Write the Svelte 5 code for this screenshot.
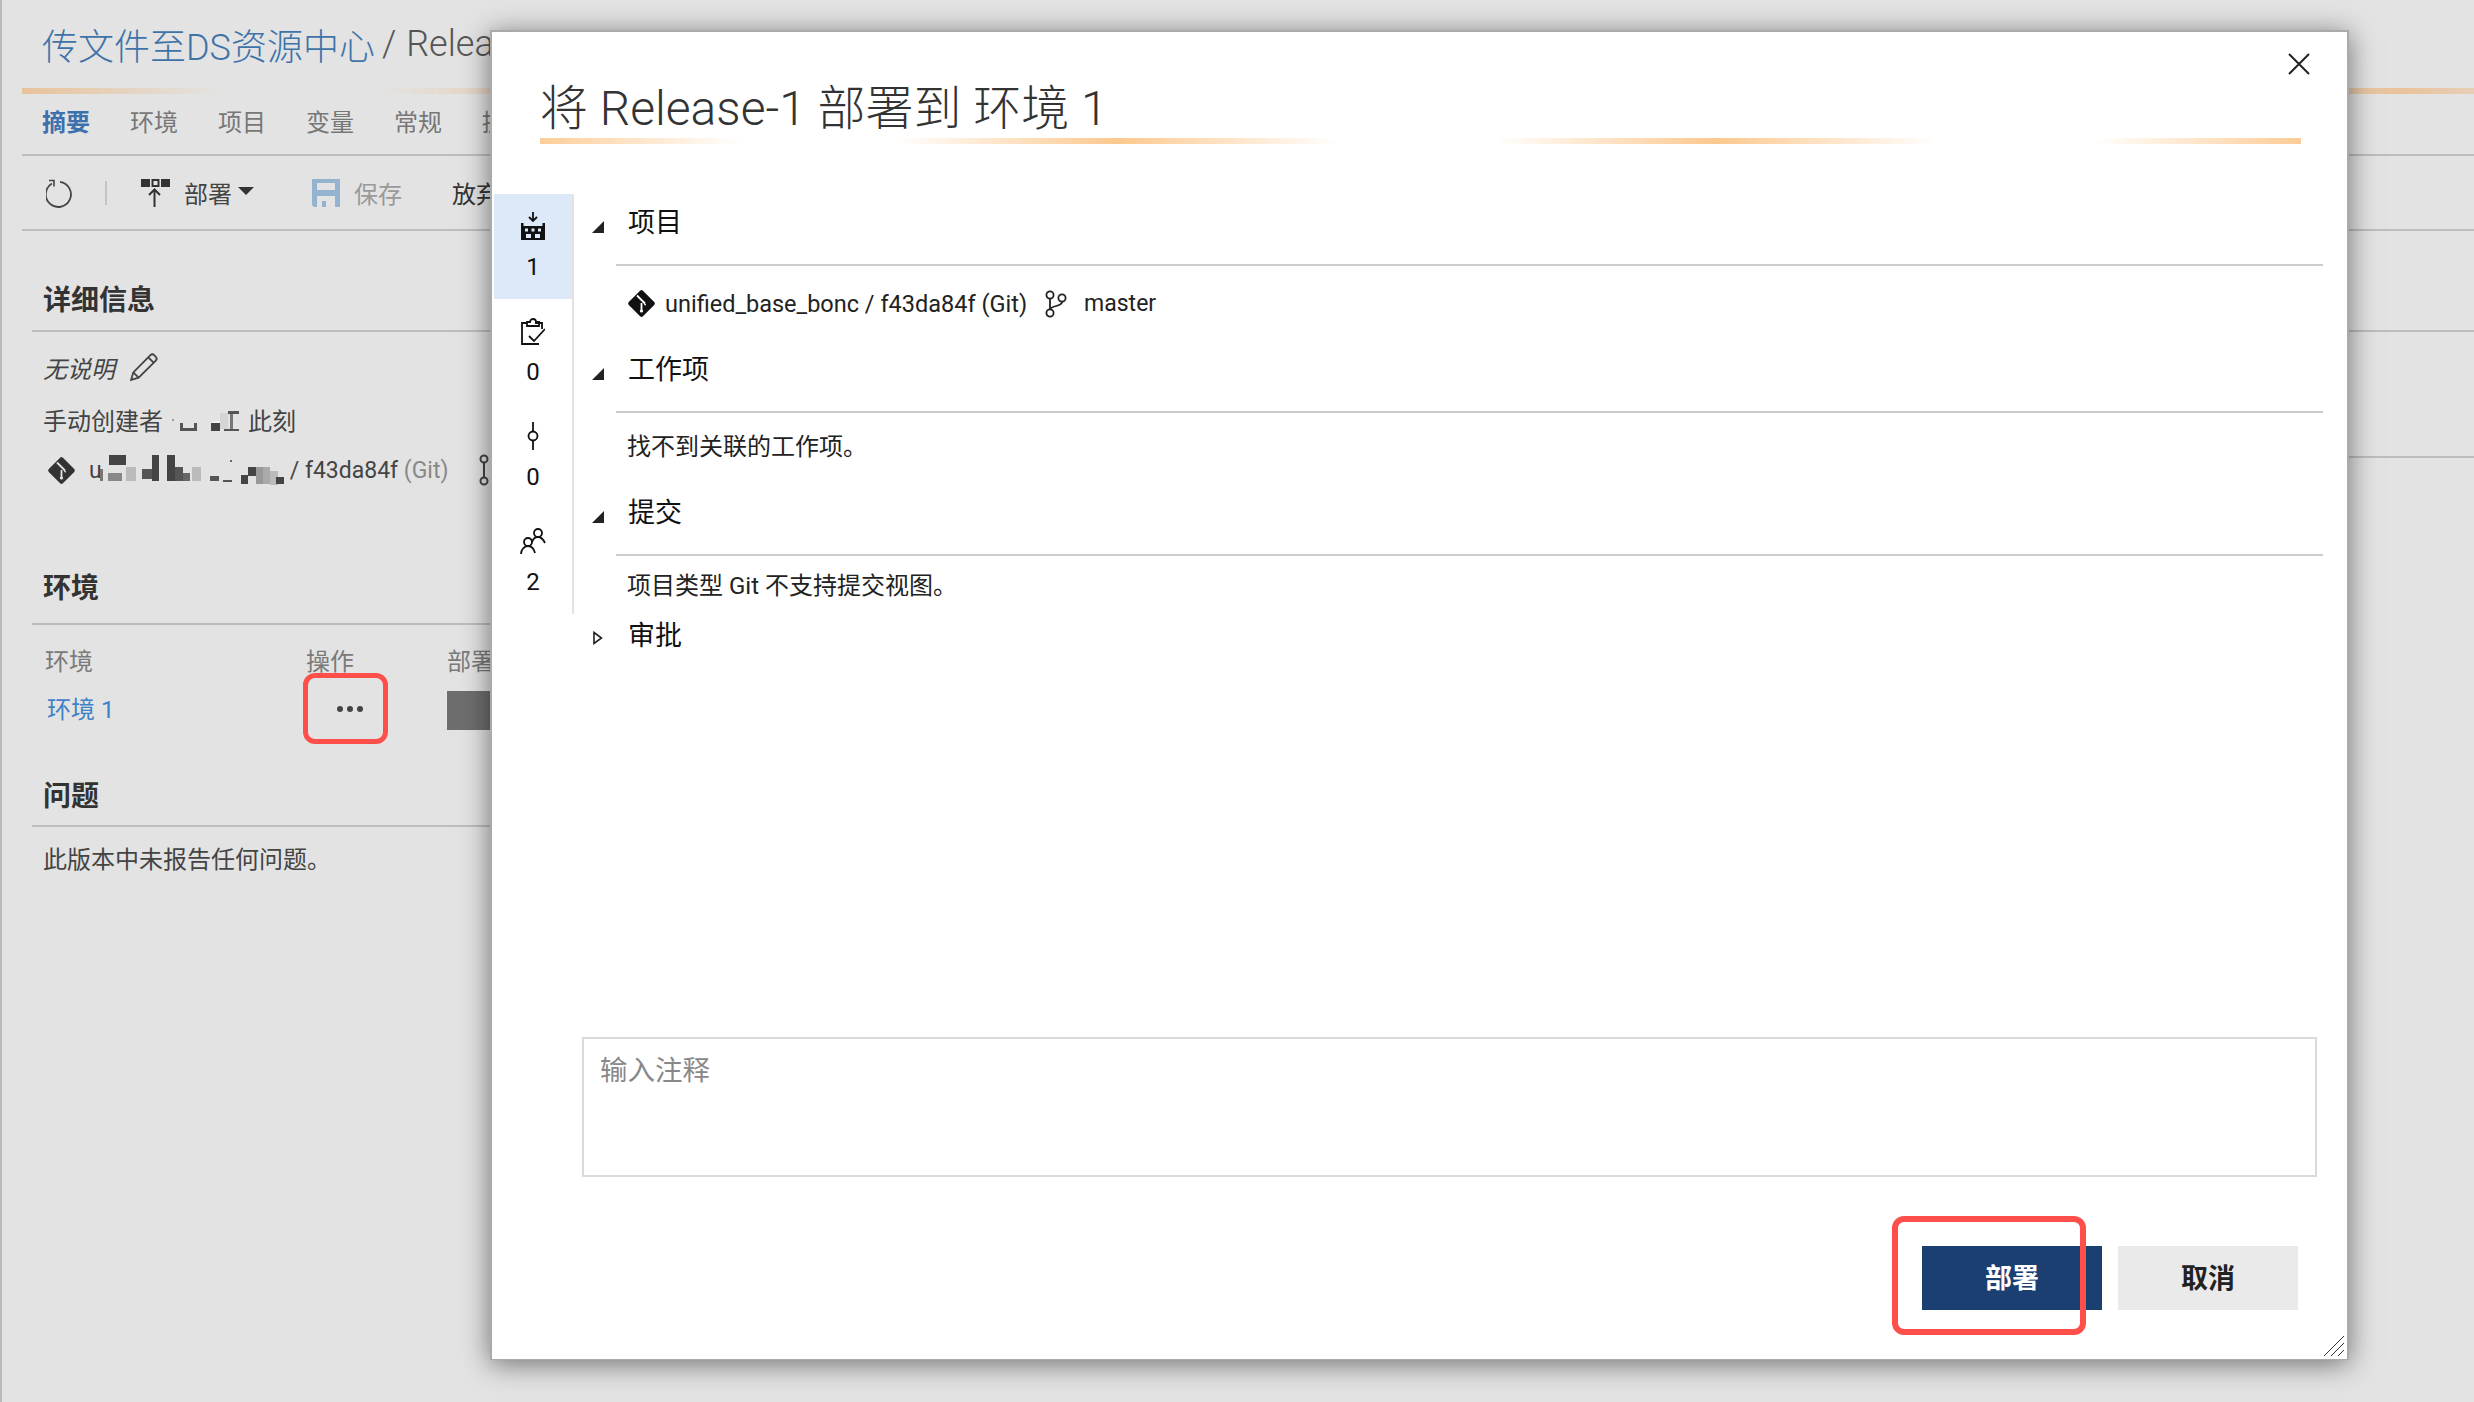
<script>
  const tabs = ['摘要', '环境', '项目', '变量', '常规', '提交'];
</script>

<div class="page">
  <header class="title">
    <span class="crumb">传文件至DS资源中心</span>
    <span class="slash">/</span>
    <span class="release">Release-1</span>
  </header>
  <div class="stripe page-stripe"></div>

  <nav class="tabs">
    {#each tabs as tab, i}
      <span class="tab" class:active={i === 0}>{tab}</span>
    {/each}
  </nav>

  <div class="toolbar">
    <svg class="ic-refresh" width="28" height="30" viewBox="0 0 28 30" fill="none" stroke="#444" stroke-width="1.8">
      <path d="M6 5.5a12.6 12.6 0 1 0 8-1.6" />
      <path d="M3 2.5h5v6" stroke-width="1.6" />
    </svg>
    <span class="sep"></span>
    <svg class="ic-deploy" width="29" height="28" viewBox="0 0 29 28">
      <rect x="0" y="0" width="9" height="8" fill="#333" />
      <rect x="11.5" y="1" width="6" height="6" fill="none" stroke="#333" stroke-width="2" />
      <rect x="20" y="0" width="9" height="8" fill="#333" />
      <path d="M13.5 28V11M8 16l5.500-5.500L19 16" fill="none" stroke="#333" stroke-width="2" />
    </svg>
    <span class="tool-label">部署</span>
    <span class="caret"></span>
    <svg class="ic-save" width="28" height="28" viewBox="0 0 28 28">
      <path d="M0 0h28v28H23V17H5v11H2l-2-2z" fill="#94b3d1" />
      <rect x="5" y="4" width="18" height="7" fill="#e3e3e3" />
      <rect x="10" y="22" width="4" height="6" fill="#94b3d1" />
    </svg>
    <span class="tool-label muted">保存</span>
    <span class="tool-label discard">放弃</span>
  </div>

  <h2 class="section-head first"><span>详细信息</span></h2>

  <div class="columns">
    <div class="col-left">
      <p class="row desc">
        <em>无说明</em>
        <svg width="30" height="30" viewBox="0 0 28 28" fill="none" stroke="#444" stroke-width="1.7">
          <path d="M2 26l2-7L20 3a2.500 2.500 0 0 1 3.500 0l1.500 1.500a2.500 2.500 0 0 1 0 3.500L9 24z" />
          <path d="M4 19l5 5M18 5l5 5" />
        </svg>
      </p>
      <p class="row created">
        <span>手动创建者</span>
        <svg class="smudge-a" width="76" height="28" viewBox="0 0 76 28">
          <rect x="4" y="14" width="2" height="2" fill="#999" />
          <rect x="12" y="18" width="3" height="8" fill="#555" />
          <rect x="12" y="23" width="17" height="3" fill="#555" />
          <rect x="26" y="18" width="3" height="8" fill="#555" />
          <rect x="44" y="16" width="8" height="8" fill="#f0f0f0" />
          <rect x="43" y="18" width="9" height="8" fill="#444" />
          <rect x="52" y="8" width="8" height="16" fill="#d5d5d5" />
          <rect x="60" y="6" width="11" height="3" fill="#555" />
          <rect x="62" y="9" width="3" height="15" fill="#777" />
          <rect x="56" y="24" width="15" height="2" fill="#555" />
        </svg>
        <span>此刻</span>
      </p>
      <div class="row git-row">
        <svg class="ic-git" width="29" height="29" viewBox="0 0 29 29">
          <rect x="4.500" y="4.500" width="20" height="20" rx="2" transform="rotate(45 14.500 14.500)" fill="#333" />
          <path d="M10 6.500l8 8M14.500 14v8M18.500 15l-1 1" stroke="#e3e3e3" stroke-width="1.800" fill="none" />
          <circle cx="14.500" cy="22" r="1.600" fill="#e3e3e3" />
        </svg>
        <span class="artifact-u">u</span>
        <svg class="smudge-b" width="186" height="34" viewBox="0 0 186 34">
          <rect x="0" y="16" width="3" height="12" fill="#777" />
          <rect x="8" y="20" width="14" height="8" fill="#888" />
          <rect x="9" y="2" width="17" height="10" fill="#444" />
          <rect x="26" y="14" width="10" height="14" fill="#bbb" />
          <rect x="42" y="16" width="14" height="10" fill="#555" />
          <rect x="52" y="2" width="7" height="26" fill="#444" />
          <rect x="67" y="2" width="8" height="26" fill="#444" />
          <rect x="75" y="14" width="8" height="14" fill="#555" />
          <rect x="83" y="20" width="7" height="8" fill="#666" />
          <rect x="92" y="14" width="9" height="14" fill="#bbb" />
          <rect x="110" y="23" width="9" height="5" fill="#555" />
          <rect x="123" y="27" width="9" height="2" fill="#555" />
          <rect x="130" y="7" width="2" height="2" fill="#666" />
          <rect x="141" y="22" width="7" height="9" fill="#444" />
          <rect x="148" y="14" width="8" height="9" fill="#444" />
          <rect x="156" y="14" width="7" height="17" fill="#999" />
          <rect x="163" y="14" width="7" height="17" fill="#aaa" />
          <rect x="170" y="18" width="8" height="14" fill="#bbb" />
          <rect x="176" y="24" width="8" height="7" fill="#444" />
        </svg>
        <span class="artifact-rest">/ f43da84f <span class="git-tag">(Git)</span></span>
        <svg class="ic-branch-bg" width="20" height="32" viewBox="0 0 20 32" fill="none" stroke="#444" stroke-width="2">
          <circle cx="6" cy="5" r="3.500" />
          <circle cx="6" cy="27" r="3.500" />
          <path d="M6 9v14" />
        </svg>
      </div>

      <h2 class="section-head env"><span>环境</span></h2>
      <div class="env-table">
        <span class="th th-env">环境</span>
        <span class="th th-op">操作</span>
        <span class="th th-dep">部署</span>
        <a class="env-link" href="#env">环境 1</a>
        <span class="dots"><i></i><i></i><i></i></span>
        <span class="dep-bar"></span>
      </div>

      <h2 class="section-head issues"><span>问题</span></h2>
      <p class="row no-issues">此版本中未报告任何问题。</p>
    </div>
    <div class="col-right">
      <div class="right-rule"></div>
    </div>
  </div>

  <span class="callout callout-dots"></span>

  <section class="modal">
    <button class="close" aria-label="关闭">
      <svg width="24" height="24" viewBox="0 0 24 24" stroke="#222" stroke-width="2">
        <path d="M2 2l20 20M22 2L2 22" />
      </svg>
    </button>

    <h1 class="modal-title">将 Release-1 部署到 环境 1</h1>
    <div class="stripe modal-stripe"></div>

    <div class="modal-body">
      <aside class="rail">
        <div class="rail-item active">
          <svg width="24" height="28" viewBox="0 0 24 28">
            <path d="M12 0v8M8 5l4 4 4-4" fill="none" stroke="#111" stroke-width="1.800" />
            <path d="M0 28V11h2.500v3h19v-3H24v17z" fill="#111" />
            <g fill="#dde8f9">
              <rect x="4" y="16.500" width="3" height="3" />
              <rect x="10.500" y="16.500" width="3" height="3" />
              <rect x="17" y="16.500" width="3" height="3" />
              <rect x="5" y="22" width="5" height="4" />
              <rect x="14" y="22" width="5" height="4" />
            </g>
          </svg>
          <span>1</span>
        </div>
        <div class="rail-item">
          <svg width="24" height="28" viewBox="0 0 24 28" fill="none" stroke="#111" stroke-width="1.800">
            <path d="M18 27H1V6h5M14 6h7v6" />
            <path d="M6 9V5h3a3 3 0 0 1 6 0h3v4z" />
            <path d="M8 19l5 5L24 12" />
          </svg>
          <span>0</span>
        </div>
        <div class="rail-item">
          <svg width="24" height="28" viewBox="0 0 24 28" fill="none" stroke="#111" stroke-width="1.800">
            <circle cx="12" cy="14" r="4.500" />
            <path d="M12 0v9.500M12 18.500V28" />
          </svg>
          <span>0</span>
        </div>
        <div class="rail-item">
          <svg width="26" height="28" viewBox="0 0 26 28" fill="none" stroke="#111" stroke-width="1.800">
            <circle cx="18" cy="6" r="4" />
            <path d="M12 15c1-3 3-5 6-5s5 2 7 6" />
            <circle cx="8" cy="15" r="4" />
            <path d="M1 27c0-4 3-8 7-8s6 3 7 7" />
          </svg>
          <span>2</span>
        </div>
      </aside>

      <div class="panels">
        <div class="panel-head">
          <svg class="tri" width="12" height="12" viewBox="0 0 12 12"><path d="M12 0v12H0z" fill="#222" /></svg>
          <h3>项目</h3>
        </div>
        <div class="panel-text p1">
          <svg class="ic-git" width="29" height="29" viewBox="0 0 29 29">
            <rect x="4.500" y="4.500" width="20" height="20" rx="2" transform="rotate(45 14.500 14.500)" fill="#111" />
            <path d="M10 6.500l8 8M14.500 14v8M18.500 15l-1 1" stroke="#fff" stroke-width="1.800" fill="none" />
            <circle cx="14.500" cy="22" r="1.600" fill="#fff" />
          </svg>
          <span class="artifact">unified_base_bonc / f43da84f (Git)</span>
          <svg class="ic-branch" width="24" height="28" viewBox="0 0 24 28" fill="none" stroke="#222" stroke-width="1.800">
            <circle cx="7" cy="5" r="3.600" />
            <circle cx="7" cy="23" r="3.600" />
            <circle cx="19" cy="8" r="3.600" />
            <path d="M7 9v10.500M19 12c0 5-12 3-12 8" />
          </svg>
          <span class="branch-name">master</span>
        </div>

        <div class="panel-head">
          <svg class="tri" width="12" height="12" viewBox="0 0 12 12"><path d="M12 0v12H0z" fill="#222" /></svg>
          <h3>工作项</h3>
        </div>
        <div class="panel-text p2">找不到关联的工作项。</div>

        <div class="panel-head">
          <svg class="tri" width="12" height="12" viewBox="0 0 12 12"><path d="M12 0v12H0z" fill="#222" /></svg>
          <h3>提交</h3>
        </div>
        <div class="panel-text p3">项目类型 Git 不支持提交视图。</div>

        <div class="panel-head closed">
          <svg class="tri" width="12" height="14" viewBox="0 0 12 14"><path d="M2 1.500L9.500 7 2 12.500z" fill="none" stroke="#222" stroke-width="1.600" /></svg>
          <h3>审批</h3>
        </div>
      </div>
    </div>

    <div class="comment">输入注释</div>

    <footer class="modal-foot">
      <button class="btn primary">部署</button>
      <button class="btn">取消</button>
    </footer>

    <svg class="grip" width="20" height="20" viewBox="0 0 20 20" stroke="#333" stroke-width="1">
      <path d="M0 20L20 0M7 20L20 7M14 20l6-6" />
    </svg>
  </section>

  <span class="callout callout-deploy"></span>
</div>

<style>
  :global(body) {
    margin: 0;
    background: #e3e3e3;
  }

  .page {
    position: relative;
    width: 2474px;
    height: 1402px;
    overflow: hidden;
    box-sizing: border-box;
    padding-left: 20px;
    background: #e3e3e3;
    border-left: 2px solid #bbb;
    font-family: Roboto, "Noto Sans CJK SC", sans-serif;
    font-size: 24px;
    color: #444;
  }

  p,
  h1,
  h2,
  h3 {
    margin: 0;
    font-weight: 400;
  }

  .title {
    display: flex;
    align-items: center;
    gap: 7px;
    height: 88px;
    box-sizing: border-box;
    padding-left: 20px;
    font-size: 36px;
    font-weight: 300;
  }

  .crumb {
    color: #3f73a8;
  }

  .slash,
  .release {
    color: #555;
  }

  .release {
    margin-left: 3px;
  }

  .stripe {
    height: 6px;
  }

  .page-stripe {
    background-image: linear-gradient(90deg, #e8c29a 0, transparent 33.7%, transparent 60%, #e8c29a 100%);
    background-size: 594px 100%;
  }

  .tabs {
    display: flex;
    align-items: center;
    gap: 40px;
    height: 62px;
    box-sizing: border-box;
    padding: 0 0 8px 20px;
    border-bottom: 2px solid #bdbdbd;
  }

  .tab {
    color: #777;
  }

  .tab.active {
    color: #3c71ad;
    font-weight: 700;
  }

  .toolbar {
    display: flex;
    align-items: center;
    height: 75px;
    box-sizing: border-box;
    padding-left: 24px;
    border-bottom: 2px solid #bdbdbd;
  }

  .sep {
    width: 2px;
    height: 24px;
    margin: 0 34px 0 31px;
    background: #c4c4c4;
  }

  .ic-deploy {
    margin-right: 14px;
  }

  .tool-label.muted {
    color: #999;
    margin-left: 14px;
  }

  .tool-label.discard {
    color: #333;
    margin-left: 50px;
  }

  .caret {
    width: 0;
    height: 0;
    margin: -4px 58px 0 6px;
    border-left: 8px solid transparent;
    border-right: 8px solid transparent;
    border-top: 8px solid #333;
  }

  .section-head {
    margin-left: 10px;
    padding-left: 11px;
    border-bottom: 2px solid #bdbdbd;
    font-size: 28px;
    line-height: 40px;
    font-weight: 700;
    color: #333;
  }

  .section-head.first {
    margin-top: 50px;
    padding-bottom: 9px;
  }

  .section-head.env {
    margin-top: 81px;
    padding-bottom: 14px;
  }

  .section-head.issues {
    margin-top: 36px;
    padding-bottom: 8px;
  }

  .columns {
    display: grid;
    grid-template-columns: 1000px 1fr;
  }

  .right-rule {
    margin-top: 124px;
    height: 2px;
    background: #bdbdbd;
  }

  .row {
    display: flex;
    align-items: center;
    height: 36px;
    margin-left: 21px;
  }

  .desc {
    margin-top: 17px;
    gap: 14px;
  }

  .created {
    margin-top: 16px;
  }

  .smudge-a {
    margin: 0 4px 0 5px;
  }

  .git-row {
    margin-top: 15px;
    margin-left: 25px;
    font-size: 23px;
  }

  .artifact-u {
    margin-left: 13px;
  }

  .smudge-b {
    margin-left: -2px;
  }

  .artifact-rest {
    margin-left: 4px;
  }

  .git-tag {
    color: #888;
  }

  .ic-branch-bg {
    margin-left: 30px;
  }

  .env-table {
    display: grid;
    grid-template-columns: 263px 141px 1fr;
    grid-template-rows: 36px 64px;
    align-items: center;
    margin: 16px 0 0 21px;
  }

  .th {
    color: #7a7a7a;
  }

  .th-env {
    margin-left: 2px;
  }

  .env-link {
    margin: 0 0 3px 4px;
    color: #3f82c8;
    text-decoration: none;
  }

  .dots {
    display: flex;
    gap: 4px;
    margin-left: 31px;
  }

  .dots i {
    width: 6px;
    height: 6px;
    border-radius: 50%;
    background: #444;
  }

  .dep-bar {
    height: 39px;
    margin-top: 2px;
    background: #6e6e6e;
  }

  .no-issues {
    margin-top: 12px;
  }

  .callout {
    position: absolute;
    box-sizing: border-box;
    border: 5px solid #ff4f4a;
    border-radius: 12px;
    z-index: 3;
  }

  .callout-dots {
    left: 301px;
    top: 673px;
    width: 85px;
    height: 71px;
  }

  .callout-deploy {
    left: 1890px;
    top: 1216px;
    width: 194px;
    height: 119px;
    border-width: 6px;
  }

  .modal {
    position: absolute;
    left: 488px;
    top: 30px;
    z-index: 2;
    display: flex;
    flex-direction: column;
    width: 1859px;
    height: 1330px;
    box-sizing: border-box;
    background: #fff;
    border: 2px solid #aaa;
    border-bottom-width: 1px;
    box-shadow: 0 4px 26px rgba(0, 0, 0, 0.5);
  }

  .close {
    position: absolute;
    right: 36px;
    top: 20px;
    padding: 0;
    border: 0;
    background: none;
    line-height: 0;
  }

  .modal-title {
    height: 106px;
    box-sizing: border-box;
    padding: 47px 0 0 48px;
    font-size: 48px;
    font-weight: 300;
    line-height: 60px;
    color: #333;
    white-space: nowrap;
  }

  .modal-stripe {
    margin: 0 46px 0 48px;
    background-image: linear-gradient(90deg, #fcc88e 0, transparent 37%, transparent 63%, #fcc88e 100%);
    background-size: 598px 100%;
    background-position: -20px 0;
  }

  .modal-body {
    display: flex;
    flex: 1;
    margin-top: 50px;
  }

  .rail {
    align-self: flex-start;
    width: 78px;
    margin-left: 2px;
    border-right: 2px solid #e3e3e3;
  }

  .rail-item {
    display: flex;
    flex-direction: column;
    align-items: center;
    gap: 12px;
    height: 105px;
    box-sizing: border-box;
    padding-top: 18px;
    font-size: 24px;
    line-height: 30px;
    color: #111;
  }

  .rail-item.active {
    background: #dde8f9;
  }

  .panels {
    flex: 1;
    margin: 0 24px 0 18px;
  }

  .panel-head {
    position: relative;
    display: flex;
    align-items: center;
    box-sizing: border-box;
    height: 72px;
    margin-left: 24px;
    padding: 0 0 12px 12px;
    border-bottom: 2px solid #ccc;
  }

  .panel-head.closed {
    border-bottom: 0;
  }

  .panel-head h3 {
    font-size: 27px;
    line-height: 40px;
    color: #111;
  }

  .tri {
    position: absolute;
    left: -24px;
    top: 27px;
  }

  .closed .tri {
    top: 25px;
  }

  .panel-text {
    display: flex;
    align-items: center;
    box-sizing: border-box;
    padding-left: 35px;
    font-size: 24px;
    line-height: 36px;
    color: #222;
  }

  .p1 {
    height: 75px;
    font-size: 23.5px;
  }

  .p2 {
    height: 71px;
    padding-bottom: 3px;
  }

  .p3 {
    height: 50px;
    padding-top: 9px;
  }

  .artifact {
    margin-left: 9px;
  }

  .ic-branch {
    margin: 0 17px 0 16px;
  }

  .branch-name {
    font-size: 23px;
  }

  .comment {
    height: 140px;
    margin: 0 30px 0 90px;
    box-sizing: border-box;
    padding: 14px 16px;
    border: 2px solid #dadada;
    font-size: 27.5px;
    line-height: 36px;
    color: #888;
  }

  .modal-foot {
    display: flex;
    justify-content: flex-end;
    gap: 16px;
    height: 182px;
    box-sizing: border-box;
    padding: 69px 49px 0 0;
  }

  .btn {
    width: 180px;
    height: 64px;
    padding: 0 0 3px;
    border: 0;
    background: #eaeaea;
    font-family: inherit;
    font-size: 27px;
    font-weight: 700;
    color: #222;
  }

  .btn.primary {
    background: #1c3f72;
    color: #fff;
  }

  .grip {
    position: absolute;
    right: 3px;
    bottom: 3px;
  }
</style>
